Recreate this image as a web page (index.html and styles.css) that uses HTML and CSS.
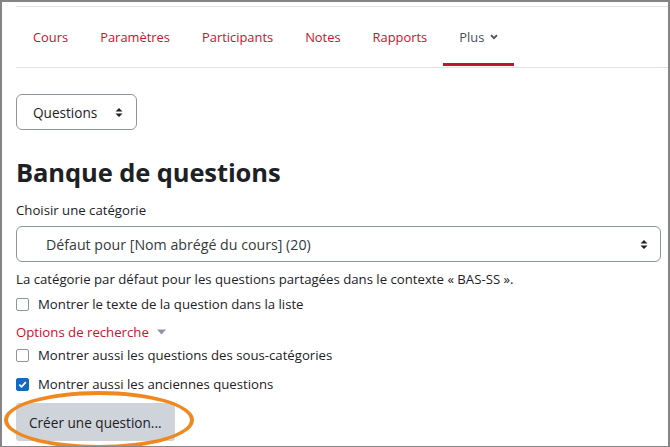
FILE: index.html
```html
<!DOCTYPE html>
<html lang="fr">
<head>
    <meta charset="UTF-8">
    <meta name="viewport" content="width=device-width, initial-scale=1.0">
    <title>Banque de questions</title>
    <link rel="stylesheet" href="styles.css">
</head>
<body>
    <div class="frame">
        <nav class="secondary-nav">
            <a class="nav-link" href="#">Cours</a>
            <a class="nav-link" href="#">Paramètres</a>
            <a class="nav-link" href="#">Participants</a>
            <a class="nav-link" href="#">Notes</a>
            <a class="nav-link" href="#">Rapports</a>
            <a class="nav-link active" href="#">Plus
                <svg class="chevron" width="8" height="6" viewBox="0 0 8 6"><path d="M1 1.2 L4 4.2 L7 1.2" fill="none" stroke="#495057" stroke-width="1.8"/></svg>
            </a>
        </nav>

        <div class="main">
            <div class="select small">
                <span>Questions</span>
                <svg class="arrows" width="8" height="11" viewBox="0 0 8 11"><path d="M0.5 4.5 L4 1 L7.5 4.5 Z M0.5 6.5 L4 10 L7.5 6.5 Z" fill="#1d2125"/></svg>
            </div>

            <h2>Banque de questions</h2>

            <label class="field-label">Choisir une catégorie</label>
            <div class="select wide">
                <span>Défaut pour [Nom abrégé du cours] (20)</span>
                <svg class="arrows" width="8" height="11" viewBox="0 0 8 11"><path d="M0.5 4.5 L4 1 L7.5 4.5 Z M0.5 6.5 L4 10 L7.5 6.5 Z" fill="#1d2125"/></svg>
            </div>
            <p class="help">La catégorie par défaut pour les questions partagées dans le contexte « BAS-SS ».</p>

            <div class="check-row first">
                <span class="box"></span>
                <span>Montrer le texte de la question dans la liste</span>
            </div>

            <div class="options">Options de recherche
                <svg width="9" height="6" viewBox="0 0 9 6"><path d="M0 0.5 L9 0.5 L4.5 5.5 Z" fill="#8f959e"/></svg>
            </div>

            <div class="check-row sub">
                <span class="box"></span>
                <span>Montrer aussi les questions des sous-catégories</span>
            </div>
            <div class="check-row old">
                <span class="box checked">
                    <svg width="11" height="11" viewBox="0 0 11 11"><path d="M2.3 5.6 L4.6 7.8 L8.8 3.2" fill="none" stroke="#fff" stroke-width="1.8"/></svg>
                </span>
                <span>Montrer aussi les anciennes questions</span>
            </div>

            <div class="create-wrap">
                <button class="btn-create">Créer une question...</button>
                <span class="highlight"></span>
            </div>
        </div>
    </div>
</body>
</html>
```

FILE: styles.css
```css
html, body {
    margin: 0;
    padding: 0;
    background: #fff;
}
body {
    font-family: "Open Sans", "Noto Sans", sans-serif;
    font-size: 13.2px;
    color: #1d2125;
}
.frame {
    box-sizing: border-box;
    width: 670px;
    height: 447px;
    border: 2px solid #858585;
    border-bottom-width: 1px;
    overflow: hidden;
    position: relative;
}
.secondary-nav {
    margin: 4px 0 0 14px;
    border-top: 1px solid #e3e3e3;
    border-bottom: 1px solid #dee2e6;
    display: flex;
    height: 60px;
}
.nav-link {
    display: flex;
    align-items: center;
    padding: 3px 16px 0;
    color: #c4122f;
    text-decoration: none;
    font-size: 12.9px;
    border-bottom: 3px solid transparent;
    margin-bottom: 1px;
}
.nav-link:first-child {
    padding-left: 17px;
}
.nav-link.active {
    color: #495057;
    border-bottom-color: #c4122f;
}
.chevron {
    margin-left: 6px;
}
.main {
    padding: 26px 0 0 14px;
    position: relative;
}
.select {
    box-sizing: border-box;
    height: 36px;
    border: 1px solid #8f959e;
    border-radius: 6px;
    display: flex;
    align-items: center;
    justify-content: space-between;
    color: #1d2125;
    font-size: 13.6px;
}
.select.small {
    width: 121px;
    padding: 0 13px 0 16px;
}
.select.wide {
    width: 645px;
    padding: 0 12px 0 29px;
    color: #343a40;
    font-size: 14.2px;
}
h2 {
    font-size: 25.5px;
    font-weight: 700;
    margin: 24px 0 0;
    line-height: 36px;
    letter-spacing: -0.1px;
}
.field-label {
    display: block;
    margin: 11px 0 7px;
}
.help {
    margin: 8px 0 0;
}
.check-row {
    display: flex;
    align-items: center;
    gap: 9px;
    height: 22px;
}
.check-row.first {
    margin-top: 5px;
}
.check-row.sub {
    margin-top: 3px;
}
.check-row.old {
    margin-top: 7px;
}
.box {
    box-sizing: border-box;
    width: 13px;
    height: 13px;
    border: 1px solid #8f959e;
    border-radius: 2px;
    display: flex;
    align-items: center;
    justify-content: center;
}
.box.checked {
    background: #0f6cbf;
    border-color: #0f6cbf;
}
.options {
    color: #c4122f;
    margin-top: 8px;
    display: flex;
    align-items: center;
    gap: 8px;
}
.create-wrap {
    position: relative;
    margin-top: 8px;
}
.btn-create {
    font-family: inherit;
    font-size: 13.6px;
    color: #1d2125;
    background: #ced4da;
    border: none;
    border-radius: 3px;
    height: 38px;
    padding: 0 13px;
}
.highlight {
    position: absolute;
    left: -12px;
    top: -12px;
    width: 182px;
    height: 50px;
    border: 4px solid #f0871f;
    border-radius: 50%;
}
```
